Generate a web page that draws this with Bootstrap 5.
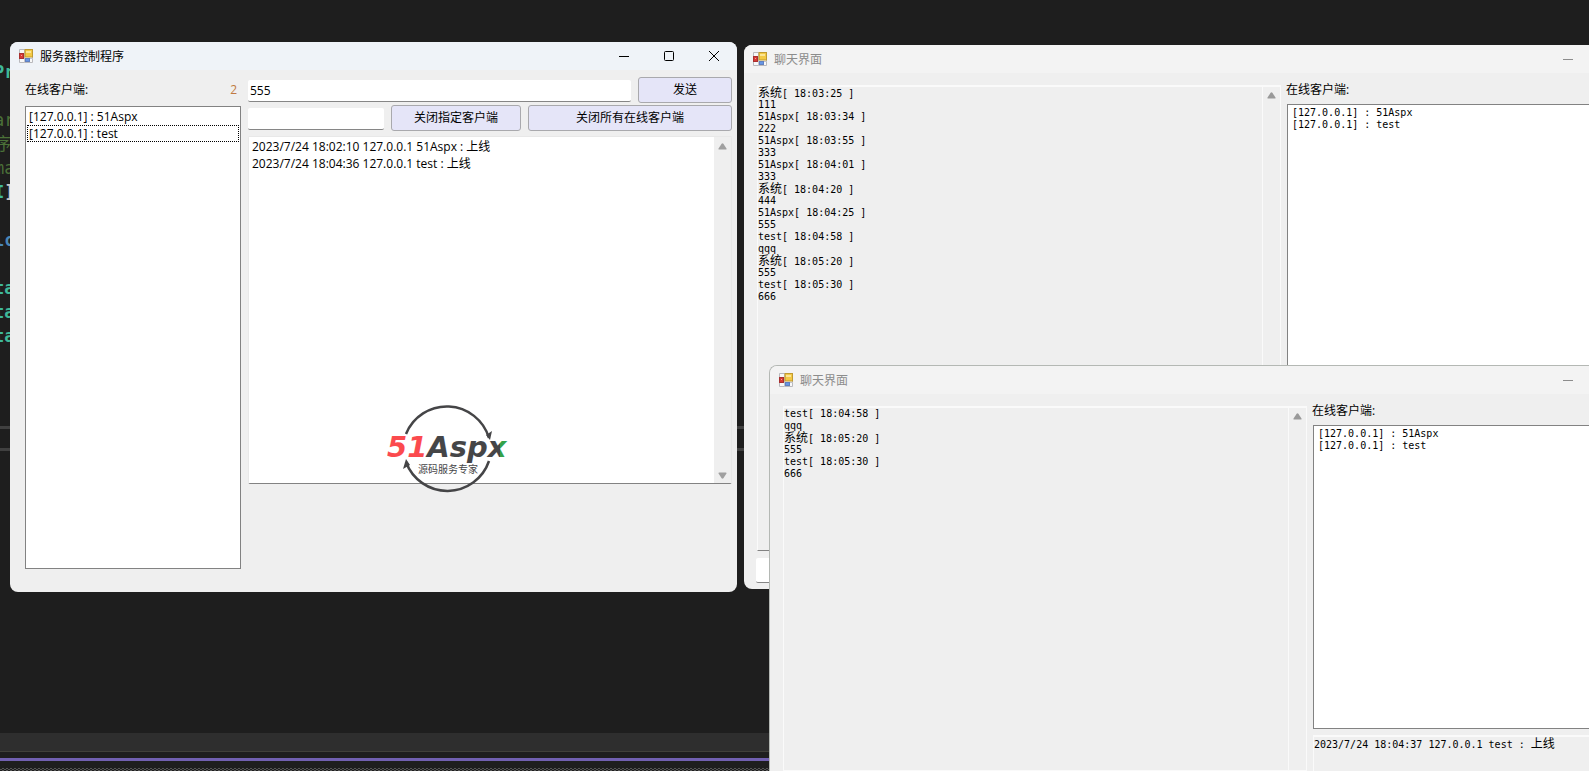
<!DOCTYPE html>
<html lang="zh-CN">
<head>
<meta charset="utf-8">
<meta name="viewport" content="width=device-width, initial-scale=1">
<title>服务器控制程序</title>
<link href="https://cdn.jsdelivr.net/npm/bootstrap@5.3.0/dist/css/bootstrap.min.css" rel="stylesheet">
<style>
  body { background: #1e1e1e; color: #000; font: 12px/17px "Open Sans", "Noto Sans CJK SC", sans-serif; }
  .desktop { height: 100vh; min-height: 600px; }

  /* code editor behind the windows */
  .editor-code { height: 426px; padding-top: 60px; margin-left: -6px; font: 700 17px/24px "DejaVu Sans Mono", "Noto Sans CJK SC", monospace; white-space: pre; }
  .c-type { color: #3fb899; } .c-note { color: #4b7038; font-weight: 400; } .c-key { color: #4a86b8; } .c-text { color: #c8c8c8; }
  .editor-rule { height: 3px; background: #404040; }
  .editor-pane { height: 19px; }
  .editor-tabs { height: 19px; background: #2e2e2e; border-bottom: 1px solid #404039; }
  .editor-accent { height: 3px; margin: 6px 0 7px; background: #7160b0; }
  .editor-dots { height: 3px; background: repeating-conic-gradient(#555 0 25%, #1e1e1e 0 50%) 0 0 / 4px 2px; }

  /* windows */
  .win { background: #efefef; border-radius: 8px; overflow: hidden; }
  .win-server { left: 10px; top: 42px; width: 727px; height: 550px; }
  .win-chat { border-radius: 8px 0 0 8px; }
  .win-chat-back { left: 744px; top: 45px; right: 0; height: 544px; }
  .win-chat-front { left: 769px; top: 365px; right: 0; bottom: 0; border: 1px solid #b4b8b4; border-width: 1px 0 0 1px; border-radius: 8px 0 0 0; }
  .win-title { height: 28px; padding-left: 9px; gap: 7px; background: #f3f3f3; color: #8c8c8c; }
  .win-server .win-title { background: #eff3f8; color: #000; }
  .win-title svg { display: block; }
  .cap-btn { width: 45px; height: 28px; padding: 0; border: 0; background: none; color: inherit; display: flex; align-items: center; justify-content: center; }
  .cap-wide { width: 42px; }
  .caps { padding-right: 1px; }

  .server-body { padding: 7px 5px 0 15px; gap: 7px; }
  .server-row { gap: 7px; margin-bottom: 2px; }
  .server-row .field { margin-top: 3px; }
  .field { height: 22px; padding: 0 2px; border: 0; border-bottom: 1px solid #868686; border-radius: 2px; background: #fff; font-size: 12px; line-height: 20px; min-width: 0; }
  .cmd { height: 26px; padding: 0; border: 1px solid #a9a9ad; border-radius: 3px; background: #e5e5f8; color: #000; font-size: 12px; line-height: 20px; }
  .cmd:hover { background: #dcdcf4; border-color: #999; color: #000; }
  .cmd-one { width: 130px; }
  .cmd-send { width: 94px; }
  .cmd-all { width: 204px; }
  .left-col { width: 216px; }
  .count { color: #c07a42; }
  .box { background: #fff; border: 1px solid #828282; }
  .box .list-group-item { padding: 0 2px; border: 0; border-radius: 0; background: none; color: #000; }
  .box .picked { outline: 1px dotted #000; outline-offset: -1px; }
  .server-list { height: 463px; padding: 1px; }
  .server-log { height: 348px; margin-top: 3px; background: #fff; border: 1px solid #e8e8e8; border-bottom-color: #828282; border-radius: 2px; }
  .server-log textarea { border: 0; resize: none; padding: 1px 3px; line-height: 17px; outline: 0; overflow: hidden; }
  .bar { width: 17px; padding: 6px 0 4px; background: #efefef; color: #a0a0a0; }
  .brand-mark { left: 139px; top: 325px; }

  /* fixed pitch text of the chat windows */
  .fixed { font: 10px/12px "DejaVu Sans Mono", "Noto Sans CJK SC", monospace; }
  .fixed b { font-weight: 400; font-size: 12px; line-height: 12px; vertical-align: baseline; }
  .fixed .line { height: 12px; white-space: pre; }
  .chat-body { padding: 12px 0 0 13px; }
  .chat-col { width: 524px; }
  .chat-log { border: 1px solid #fafafa; border-top-width: 2px; }
  .chat-back-log { height: 466px; border-bottom: 1px solid #828282; }
  .chat-bar { width: 18px; border-left: 1px solid #fafafa; color: #999; padding-top: 5px; }
  .side { padding-left: 6px; }
  .side-label { margin: -4px 0 4px -1px; height: 19px; }
  .side .box { border-right: 0; padding: 2px; }
  .side-list { height: 304px; }
  .status { border: 1px solid #fafafa; border-width: 2px 0 0 1px; margin-top: 6px; padding: 1px 0; }
  .chat-entry { height: 25px; margin: 7px 0 0 -1px; }
</style>
</head>
<body class="m-0">
<svg width="0" height="0" class="position-absolute" aria-hidden="true">
  <symbol id="app" viewBox="0 0 14 14">
    <path fill="#f8f8f8" stroke="#b9b9bd" d="M.5 .5h13v13H.5z"/>
    <path stroke="#c4c4ca" d="M5.5 0v14M0 9.5h14"/>
    <rect x="6" y=".5" width="7.500" height="7.500" fill="#f3c945" stroke="#c09a30"/>
    <path fill="#fbe596" d="M7 2h5v2H7z"/>
    <rect x=".5" y="4.500" width="4" height="5" fill="#d83a34" stroke="#a83030"/>
    <path fill="#f3a19a" d="M2 6h1v1H2z"/>
    <rect x="6.500" y="9.500" width="4" height="3" fill="#6796e4" stroke="#6080c0"/>
  </symbol>
  <symbol id="up" viewBox="0 0 10 8"><path fill="currentColor" d="M4 .8Q5-.3 6 .8L9.700 6.500Q9.700 7.500 8.700 7.500H1.300Q.3 7.500.3 6.500z"/></symbol>
  <symbol id="down" viewBox="0 0 10 8"><path fill="currentColor" d="M4 7.200Q5 8.300 6 7.200L9.700 1.500Q9.700.5 8.700.5H1.300Q.3.5.3 1.500z"/></symbol>
</svg>

<main class="desktop position-relative overflow-hidden d-flex flex-column">
  <div class="editor-code" aria-hidden="true"><div class="c-type">Pr</div><div> </div><div class="c-note">ar</div><div class="c-note">序</div><div class="c-note">ma</div><div><span class="c-type">I</span><span class="c-text">]</span></div><div> </div><div class="c-key">lc</div><div> </div><div class="c-type">ta</div><div class="c-type">ta</div><div class="c-type">ta</div></div>
  <div class="editor-rule"></div>
  <div class="editor-pane"></div>
  <div class="editor-rule"></div>
  <div class="flex-fill"></div>
  <div class="editor-tabs"></div>
  <div class="editor-accent"></div>
  <div class="editor-dots"></div>

  <!-- server control window -->
  <section class="win win-server position-absolute">
    <header class="win-title d-flex align-items-center">
      <svg width="14" height="14"><use href="#app"/></svg>
      <span class="flex-fill">服务器控制程序</span>
      <div class="caps d-flex">
      <button type="button" class="cap-btn" aria-label="最小化"><svg width="10" height="10"><path stroke="currentColor" d="M0 5.500h10"/></svg></button>
      <button type="button" class="cap-btn" aria-label="最大化"><svg width="10" height="10"><rect x=".5" y=".5" width="9" height="9" rx="1" fill="none" stroke="currentColor"/></svg></button>
      <button type="button" class="cap-btn" aria-label="关闭"><svg width="10" height="10"><path stroke="currentColor" d="M0 0l10 10M10 0L0 10"/></svg></button>
      </div>
    </header>
    <div class="server-body d-flex">
      <div class="left-col">
        <div class="d-flex justify-content-between pe-1 pt-1 mb-2"><span>在线客户端:</span><span class="count">2</span></div>
        <ul class="list-group rounded-0 box server-list">
          <li class="list-group-item">[127.0.0.1] : 51Aspx</li>
          <li class="list-group-item picked">[127.0.0.1] : test</li>
        </ul>
      </div>
      <div class="flex-fill d-flex flex-column position-relative">
        <div class="server-row d-flex align-items-start">
          <input class="field flex-fill" type="text" value="555" aria-label="消息">
          <button type="button" class="btn cmd cmd-send">发送</button>
        </div>
        <div class="server-row d-flex align-items-start">
          <input class="field flex-fill" type="text" size="1" aria-label="客户端">
          <button type="button" class="btn cmd cmd-one">关闭指定客户端</button>
          <button type="button" class="btn cmd cmd-all">关闭所有在线客户端</button>
        </div>
        <div class="server-log d-flex">
          <textarea class="flex-fill" readonly aria-label="日志">2023/7/24 18:02:10 127.0.0.1 51Aspx : 上线
2023/7/24 18:04:36 127.0.0.1 test : 上线</textarea>
          <div class="bar d-flex flex-column align-items-center justify-content-between">
            <svg width="9" height="7"><use href="#up"/></svg>
            <svg width="9" height="7"><use href="#down"/></svg>
          </div>
        </div>
        <svg class="brand-mark position-absolute" width="130" height="94" viewBox="0 0 130 94" role="img" aria-label="51Aspx">
          <defs><linearGradient id="ink" gradientUnits="userSpaceOnUse" x1="0" y1="0" x2="130" y2="0">
            <stop offset=".3" stop-color="#fb4a4e"/><stop offset=".3" stop-color="#454547"/>
            <stop offset=".87" stop-color="#454547"/><stop offset=".87" stop-color="#35a24a"/>
          </linearGradient></defs>
          <g fill="none" stroke="#454547" stroke-width="2.500">
            <path d="M19 32A44 44 0 0 1 102 36"/><path d="M102 59A44 44 0 0 1 19 60"/>
          </g>
          <path fill="#454547" d="M99 33l6-4-2 9zM23 63l-7 4 3-10z"/>
          <text x="0" y="55" font-family="DejaVu Sans" font-size="29" font-weight="700" font-style="italic" fill="url(#ink)">51Aspx</text>
          <text x="61" y="71" text-anchor="middle" font-family="Noto Sans CJK SC" font-size="10" fill="#454547">源码服务专家</text>
        </svg>
      </div>
    </div>
  </section>

  <!-- first chat window -->
  <section class="win win-chat win-chat-back position-absolute">
    <header class="win-title d-flex align-items-center">
      <svg width="14" height="14"><use href="#app"/></svg>
      <span class="flex-fill">聊天界面</span>
      <button type="button" class="cap-btn cap-wide" aria-label="最小化"><svg width="10" height="10"><path stroke="currentColor" d="M0 5.500h10"/></svg></button>
    </header>
    <div class="chat-body d-flex">
      <div class="chat-col flex-shrink-0">
        <div class="chat-log chat-back-log d-flex">
          <div class="fixed flex-fill" role="log">
            <div class="line"><b>系统</b>[ 18:03:25 ]</div>
            <div class="line">111</div>
            <div class="line">51Aspx[ 18:03:34 ]</div>
            <div class="line">222</div>
            <div class="line">51Aspx[ 18:03:55 ]</div>
            <div class="line">333</div>
            <div class="line">51Aspx[ 18:04:01 ]</div>
            <div class="line">333</div>
            <div class="line"><b>系统</b>[ 18:04:20 ]</div>
            <div class="line">444</div>
            <div class="line">51Aspx[ 18:04:25 ]</div>
            <div class="line">555</div>
            <div class="line">test[ 18:04:58 ]</div>
            <div class="line">qqq</div>
            <div class="line"><b>系统</b>[ 18:05:20 ]</div>
            <div class="line">555</div>
            <div class="line">test[ 18:05:30 ]</div>
            <div class="line">666</div>
          </div>
          <div class="chat-bar d-flex justify-content-center"><svg width="9" height="7"><use href="#up"/></svg></div>
        </div>
        <input class="field chat-entry w-100" type="text" aria-label="输入消息">
      </div>
      <div class="side flex-fill">
        <div class="side-label">在线客户端:</div>
        <ul class="list-group rounded-0 box side-list fixed">
          <li class="list-group-item line">[127.0.0.1] : 51Aspx</li>
          <li class="list-group-item line">[127.0.0.1] : test</li>
        </ul>
      </div>
    </div>
  </section>

  <!-- second chat window -->
  <section class="win win-chat win-chat-front position-absolute d-flex flex-column">
    <header class="win-title d-flex align-items-center flex-shrink-0">
      <svg width="14" height="14"><use href="#app"/></svg>
      <span class="flex-fill">聊天界面</span>
      <button type="button" class="cap-btn cap-wide" aria-label="最小化"><svg width="10" height="10"><path stroke="currentColor" d="M0 5.500h10"/></svg></button>
    </header>
    <div class="chat-body d-flex flex-fill">
      <div class="chat-col chat-log flex-shrink-0 d-flex">
        <div class="fixed flex-fill" role="log">
          <div class="line">test[ 18:04:58 ]</div>
          <div class="line">qqq</div>
          <div class="line"><b>系统</b>[ 18:05:20 ]</div>
          <div class="line">555</div>
          <div class="line">test[ 18:05:30 ]</div>
          <div class="line">666</div>
        </div>
        <div class="chat-bar d-flex justify-content-center"><svg width="9" height="7"><use href="#up"/></svg></div>
      </div>
      <div class="side flex-fill d-flex flex-column">
        <div class="side-label flex-shrink-0">在线客户端:</div>
        <ul class="list-group rounded-0 box side-list fixed flex-shrink-0">
          <li class="list-group-item line">[127.0.0.1] : 51Aspx</li>
          <li class="list-group-item line">[127.0.0.1] : test</li>
        </ul>
        <div class="status fixed flex-fill"><div class="line">2023/7/24 18:04:37 127.0.0.1 test : <b>上线</b></div></div>
      </div>
    </div>
  </section>
</main>
<script src="https://cdn.jsdelivr.net/npm/bootstrap@5.3.0/dist/js/bootstrap.bundle.min.js"></script>
</body>
</html>
